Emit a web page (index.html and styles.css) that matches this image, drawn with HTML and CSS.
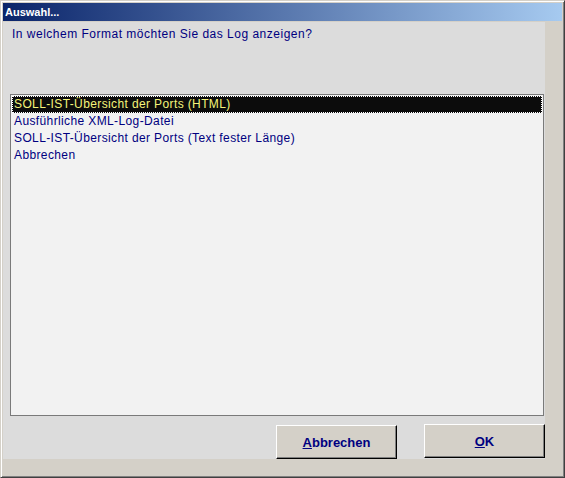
FILE: index.html
```html
<!DOCTYPE html>
<html lang="de">
<head>
<meta charset="utf-8">
<title>Auswahl...</title>
<link rel="stylesheet" href="styles.css">
</head>
<body>
<div class="window">
  <div class="titlebar"><span class="title">Auswahl...</span></div>
  <div class="client">
    <div class="panel">
      <p class="prompt">In welchem Format möchten Sie das Log anzeigen?</p>
      <ul class="list">
        <li class="item selected">SOLL-IST-Übersicht der Ports (HTML)</li>
        <li class="item">Ausführliche XML-Log-Datei</li>
        <li class="item">SOLL-IST-Übersicht der Ports (Text fester Länge)</li>
        <li class="item">Abbrechen</li>
      </ul>
      <div class="buttons">
        <button class="btn btn-cancel"><u>A</u>bbrechen</button>
        <button class="btn btn-ok"><u>O</u>K</button>
      </div>
    </div>
  </div>
</div>
</body>
</html>
```

FILE: styles.css
```css
html, body {
  margin: 0;
  padding: 0;
  background: #d4d0c8;
}

.window {
  box-sizing: border-box;
  width: 565px;
  height: 478px;
  display: flex;
  flex-direction: column;
  background: #d4d0c8;
  border-style: solid;
  border-width: 1px;
  border-color: #d4d0c8 #404040 #404040 #d4d0c8;
  box-shadow: inset 1px 1px 0 #ffffff, inset -1px -1px 0 #808080;
  padding: 2px;
}

.titlebar {
  height: 18px;
  flex: none;
  display: flex;
  align-items: center;
  padding-left: 2px;
  background: linear-gradient(to right, #0a246a, #a6caf0);
}

.title {
  color: #ffffff;
  font-family: "Liberation Sans", Arial, sans-serif;
  font-weight: bold;
  font-size: 11px;
  line-height: 13px;
}

.client {
  flex: 1;
  display: flex;
  flex-direction: column;
  padding: 1px 17px 16px 0;
}

.panel {
  flex: 1;
  display: flex;
  flex-direction: column;
  background: #dcdcdc;
  padding: 5px 0 0 7px;
}

.prompt {
  margin: 0 0 53px 2px;
  color: #000080;
  font-family: "Liberation Sans", Arial, sans-serif;
  font-size: 12px;
  line-height: 14px;
  letter-spacing: 0.5px;
}

.list {
  list-style: none;
  margin: 0;
  padding: 1px;
  width: 530px;
  height: 318px;
  background: #f2f2f2;
  border: 1px solid #7a7a7a;
}

.item {
  height: 17px;
  line-height: 17px;
  padding-left: 2px;
  color: #000080;
  font-family: "Liberation Sans", Arial, sans-serif;
  font-size: 12px;
  letter-spacing: 0.38px;
  white-space: nowrap;
}

.item.selected {
  background: #0c0c0c;
  color: #f4f47a;
  outline: 1px dotted #ffffff;
  outline-offset: -1px;
}

.buttons {
  display: flex;
  align-items: flex-start;
  gap: 27px;
  margin-top: 8px;
  padding-left: 266px;
}

.btn {
  box-sizing: border-box;
  width: 121px;
  height: 34px;
  margin: 0;
  padding: 0;
  background: #d4d0c8;
  color: #000080;
  font-family: "Liberation Sans", Arial, sans-serif;
  font-weight: bold;
  font-size: 13px;
  border-style: solid;
  border-width: 1px;
  border-color: #ffffff #000000 #000000 #ffffff;
  box-shadow: inset -1px -1px 0 #808080;
}

.btn-cancel {
  margin-top: 1px;
}

.btn u {
  text-decoration: underline;
}
```
